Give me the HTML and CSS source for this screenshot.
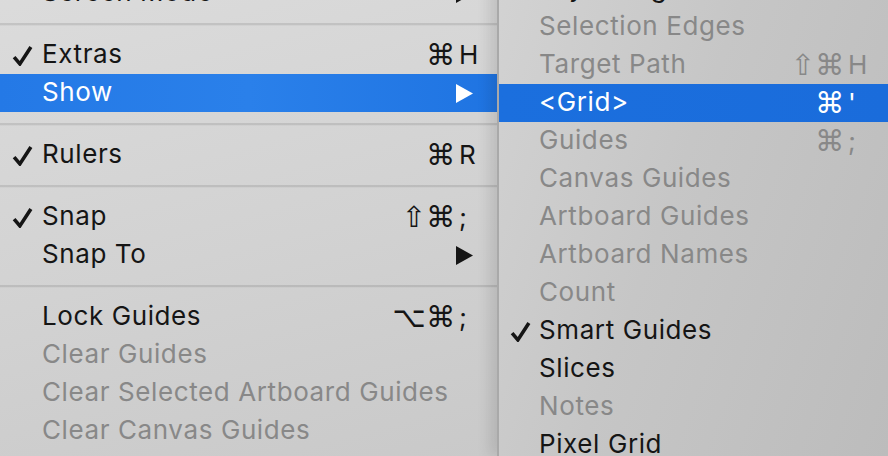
FILE: index.html
```html
<!DOCTYPE html>
<html lang="en">
<head>
  <meta charset="UTF-8">
  <title>View menu</title>
  <link rel="stylesheet" href="styles.css">
</head>
<body>
  <div class="screen">
    <!-- main View menu -->
    <div class="menu main">
      <div class="item"><span class="check"></span><span class="label">Screen Mode</span><span class="shortcut"><span class="mods"></span><span class="key"><svg class="arrow" viewBox="0 0 17 19"><path d="M0 0 L17 9.5 L0 19 Z"/></svg></span></span></div>
      <div class="sep"></div>
      <div class="item"><span class="check"><svg viewBox="0 0 20 20"><path d="M2 11.5 L7.5 18 L18 2"/></svg></span><span class="label">Extras</span><span class="shortcut"><span class="mods">⌘</span><span class="key">H</span></span></div>
      <div class="item active"><span class="check"></span><span class="label">Show</span><span class="shortcut"><span class="mods"></span><span class="key"><svg class="arrow" viewBox="0 0 17 19"><path d="M0 0 L17 9.5 L0 19 Z"/></svg></span></span></div>
      <div class="sep"></div>
      <div class="item"><span class="check"><svg viewBox="0 0 20 20"><path d="M2 11.5 L7.5 18 L18 2"/></svg></span><span class="label">Rulers</span><span class="shortcut"><span class="mods">⌘</span><span class="key">R</span></span></div>
      <div class="sep"></div>
      <div class="item"><span class="check"><svg viewBox="0 0 20 20"><path d="M2 11.5 L7.5 18 L18 2"/></svg></span><span class="label">Snap</span><span class="shortcut"><span class="mods">⇧⌘</span><span class="key">;</span></span></div>
      <div class="item"><span class="check"></span><span class="label">Snap To</span><span class="shortcut"><span class="mods"></span><span class="key"><svg class="arrow" viewBox="0 0 17 19"><path d="M0 0 L17 9.5 L0 19 Z"/></svg></span></span></div>
      <div class="sep"></div>
      <div class="item"><span class="check"></span><span class="label">Lock Guides</span><span class="shortcut"><span class="mods">⌥⌘</span><span class="key">;</span></span></div>
      <div class="item disabled"><span class="check"></span><span class="label">Clear Guides</span></div>
      <div class="item disabled"><span class="check"></span><span class="label">Clear Selected Artboard Guides</span></div>
      <div class="item disabled"><span class="check"></span><span class="label">Clear Canvas Guides</span></div>
      <div class="item"><span class="check"></span><span class="label">New Guide…</span></div>
    </div>

    <!-- Show submenu -->
    <div class="menu sub">
      <div class="item"><span class="check"></span><span class="label">Layer Edges</span></div>
      <div class="item disabled"><span class="check"></span><span class="label">Selection Edges</span></div>
      <div class="item disabled"><span class="check"></span><span class="label">Target Path</span><span class="shortcut"><span class="mods">⇧⌘</span><span class="key">H</span></span></div>
      <div class="item active"><span class="check"></span><span class="label">&lt;Grid&gt;</span><span class="shortcut"><span class="mods">⌘</span><span class="key">'</span></span></div>
      <div class="item disabled"><span class="check"></span><span class="label">Guides</span><span class="shortcut"><span class="mods">⌘</span><span class="key">;</span></span></div>
      <div class="item disabled"><span class="check"></span><span class="label">Canvas Guides</span></div>
      <div class="item disabled"><span class="check"></span><span class="label">Artboard Guides</span></div>
      <div class="item disabled"><span class="check"></span><span class="label">Artboard Names</span></div>
      <div class="item disabled"><span class="check"></span><span class="label">Count</span></div>
      <div class="item"><span class="check"><svg viewBox="0 0 20 20"><path d="M2 11.5 L7.5 18 L18 2"/></svg></span><span class="label">Smart Guides</span></div>
      <div class="item"><span class="check"></span><span class="label">Slices</span></div>
      <div class="item disabled"><span class="check"></span><span class="label">Notes</span></div>
      <div class="item"><span class="check"></span><span class="label">Pixel Grid</span></div>
    </div>
  </div>
</body>
</html>
```

FILE: styles.css
```css
html, body {
  margin: 0;
  padding: 0;
}

body {
  width: 888px;
  height: 456px;
  overflow: hidden;
  font-family: Inter, "Liberation Sans", sans-serif;
  font-size: 26px;
  color: #151515;
}

.screen {
  display: flex;
  width: 888px;
  height: 456px;
  overflow: hidden;
}

.menu {
  display: flex;
  flex-direction: column;
}

.main {
  width: 497px;
  flex: none;
  margin-top: -26px;
  background: linear-gradient(165deg, #dcdcdc 0%, #d2d2d2 55%, #c9c9c9 100%);
}

.sub {
  flex: 1;
  margin-top: -30px;
  border-left: 2px solid #a9a9a9;
  background: linear-gradient(110deg, #d3d3d3 0%, #c6c6c6 45%, #bcbcbc 100%);
  box-shadow: -8px 0 12px rgba(0, 0, 0, 0.1);
  position: relative;
}

.item {
  height: 38px;
  flex: none;
  display: flex;
  align-items: center;
  padding-right: 14px;
}

.sub .item {
  padding-right: 16px;
}

.check {
  width: 30px;
  padding-left: 12px;
  flex: none;
  display: flex;
  align-items: center;
}

.sub .check {
  width: 29px;
  padding-left: 11px;
}

.check svg {
  width: 21px;
  height: 21px;
  fill: none;
  stroke: #151515;
  stroke-width: 3.4;
  stroke-linejoin: miter;
}

.label {
  flex: 1;
  white-space: nowrap;
  line-height: 1;
  padding-bottom: 2px;
  letter-spacing: 0.6px;
}

.shortcut {
  display: flex;
  align-items: center;
  gap: 4px;
  font-family: "DejaVu Sans", sans-serif;
  font-size: 29px;
  line-height: 1;
}

.mods {
  text-align: right;
}

.key {
  width: 24px;
  font-family: Inter, "Liberation Sans", sans-serif;
  font-size: 26px;
  display: flex;
  align-items: center;
}

.arrow {
  width: 17px;
  height: 19px;
  margin-left: -3px;
  fill: #151515;
}

.disabled {
  color: #888888;
}

.active {
  background: linear-gradient(90deg, #2479e6 0%, #2a80ea 50%, #1f74e2 100%);
  color: #fff;
}

.sub .active {
  background: linear-gradient(90deg, #1b6fde 0%, #1a6cdb 100%);
}

.active .arrow {
  fill: #fff;
}

.sep {
  height: 24px;
  flex: none;
  display: flex;
  align-items: center;
}

.sep::after {
  content: "";
  display: block;
  width: 100%;
  height: 2px;
  background: rgba(0, 0, 0, 0.1);
  border-bottom: 1px solid rgba(255, 255, 255, 0.25);
}
```
